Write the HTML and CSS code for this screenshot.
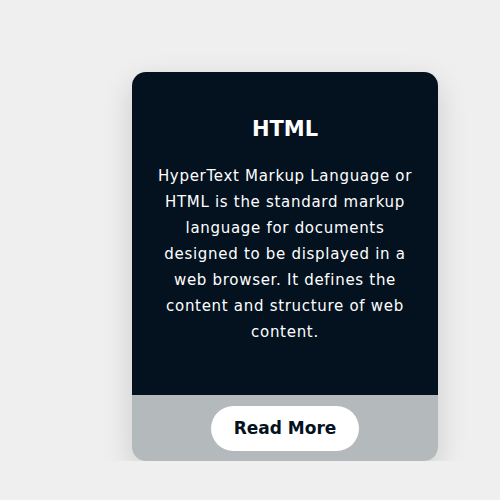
FILE: index.html
```html
<!DOCTYPE html>
<html lang="en">

<head>
  <meta charset="UTF-8">
  <meta name="viewport" content="width=device-width, initial-scale=1.0">
  <title>HTML card</title>
  <link rel="stylesheet" href="styles.css">
</head>

<body>
  <div class="card">
    <div class="card-body">
      <h2>HTML</h2>
      <p>HyperText Markup Language or HTML is the standard markup language for documents designed to be displayed in a web browser. It defines the content and structure of web content.</p>
    </div>
    <div class="card-footer">
      <button class="btn">Read More</button>
    </div>
  </div>
</body>

</html>
```

FILE: styles.css
```css
* {
  margin: 0;
  padding: 0;
  box-sizing: border-box;
}

body {
  background: #efefef;
  font-family: "DejaVu Sans", sans-serif;
  padding: 72px 0 0 132px;
}

.card {
  width: 306px;
  border-radius: 14px;
  overflow: hidden;
  box-shadow: 0 10px 30px rgba(0, 0, 0, 0.15);
}

.card-body {
  background: #04121f;
  color: #fff;
  text-align: center;
  padding: 44px 22px 0;
  height: 323px;
}

.card-body h2 {
  font-size: 21px;
  font-weight: 700;
  line-height: 26px;
  margin-bottom: 21px;
}

.card-body p {
  font-size: 15px;
  line-height: 26px;
  letter-spacing: 0.7px;
}

.card-footer {
  background: #b4b9bb;
  height: 66px;
  display: flex;
  align-items: center;
  justify-content: center;
}

.btn {
  width: 148px;
  height: 45px;
  border: none;
  border-radius: 23px;
  background: #fff;
  color: #04121f;
  font-family: inherit;
  font-size: 17px;
  font-weight: 600;
  cursor: pointer;
}
```
